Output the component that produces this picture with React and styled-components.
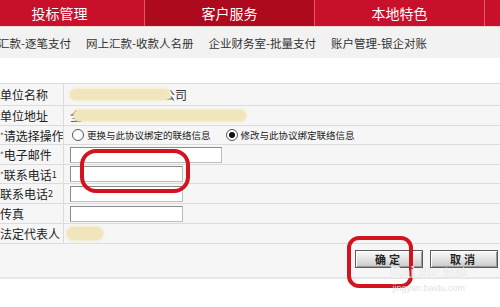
import React from "react";
import styled, { createGlobalStyle, css } from "styled-components";

const Global = createGlobalStyle`
  html, body { margin: 0; padding: 0; background: #fff; }
  body { font-family: "Noto Sans CJK SC", "Noto Sans", sans-serif; color: #333; }
`;

const Page = styled.div`
  position: relative;
  width: 500px;
  height: 307px;
  overflow: hidden;
  background: #fff;
`;

const NavBar = styled.div`
  display: flex;
  height: 26px;
  margin-left: -25px;
  background: #c8102b;
  border-bottom: 1px solid #f4d4d8;
`;

const NavItem = styled.div`
  flex: 0 0 170px;
  display: flex;
  align-items: center;
  justify-content: center;
  font-size: 14px;
  color: #fff;
  border-right: 1px solid #dc5a6a;
  box-sizing: border-box;
  ${(p) =>
    p.$active &&
    css`
      background: #ad0a1d;
    `}
`;

const SubNav = styled.div`
  display: flex;
  align-items: center;
  gap: 15px;
  height: 31px;
  margin-left: -2px;
  background: #f2f2f2;
  font-size: 11.5px;
  color: #333;
  white-space: nowrap;
`;

const FormTable = styled.div`
  margin-top: 25px;
  background: #f6f6f6;
  border-top: 1px solid #dcdcdc;
`;

const Row = styled.div`
  display: grid;
  grid-template-columns: 64px 1fr;
  height: ${(p) => p.$h}px;
  box-sizing: border-box;
  border-bottom: 1px solid #dcdcdc;
`;

const Label = styled.div`
  display: flex;
  align-items: center;
  font-size: 12px;
  color: #222;
  border-right: 1px solid #dcdcdc;
  white-space: nowrap;
  overflow: hidden;
`;

const Star = styled.span`
  font-size: 8px;
  color: #444;
`;

const Small = styled.span`
  font-size: 9px;
`;

const Value = styled.div`
  display: flex;
  align-items: center;
  padding-left: 6px;
  font-size: 12px;
  color: #222;
  white-space: nowrap;
`;

const Blob = styled.span`
  display: inline-block;
  position: relative;
  z-index: 1;
  width: ${(p) => p.$w}px;
  height: ${(p) => p.$hh || 11}px;
  border-radius: 8px;
  background: #f1e5bd;
  box-shadow: 0 0 3px 1px #f4ebca;
  margin-left: ${(p) => p.$ml || 0}px;
  margin-right: ${(p) => p.$mr || 0}px;
`;

const Faint = styled.span`
  font-size: 12px;
  color: #333;
`;

const TextInput = styled.div`
  width: ${(p) => p.$w}px;
  height: 14px;
  border: 1px solid #8a8a8a;
  border-right-color: #bdbdbd;
  border-bottom-color: #bdbdbd;
  background: #fff;
`;

const RadioGroup = styled.label`
  display: flex;
  align-items: center;
  gap: 3px;
  margin-left: 2px;
  margin-right: 13px;
  font-size: 9.5px;
  color: #222;
`;

const RadioCircle = styled.span`
  position: relative;
  display: inline-block;
  width: 10px;
  height: 10px;
  border-radius: 50%;
  border: 1px solid #555;
  background: #fff;
  ${(p) =>
    p.$checked &&
    css`
      &::after {
        content: "";
        position: absolute;
        left: 2px;
        top: 2px;
        width: 6px;
        height: 6px;
        border-radius: 50%;
        background: #111;
      }
    `}
`;

const ButtonRow = styled.div`
  display: flex;
  justify-content: flex-end;
  align-items: center;
  gap: 7px;
  height: 35px;
  padding-right: 2px;
  padding-bottom: 4px;
  box-sizing: border-box;
  background: #f6f6f6;
  border-bottom: 2px solid #e6e6e6;
`;

const Button = styled.button`
  width: 68px;
  height: 18px;
  padding: 0;
  border: 1px solid #5a5a5a;
  box-shadow: inset 1px 1px 0 #fff, inset -1px -1px 0 #9a9a9a;
  background: linear-gradient(#fafafa, #e4e4e4 50%, #c9c9c9);
  font-family: "Noto Sans CJK SC", sans-serif;
  font-size: 11px;
  font-weight: bold;
  letter-spacing: 3px;
  line-height: 14px;
  color: #222;
`;

const Mark = styled.div`
  position: absolute;
  left: ${(p) => p.$x}px;
  top: ${(p) => p.$y}px;
  width: ${(p) => p.$w}px;
  height: ${(p) => p.$h}px;
  border: 4px solid #d3141f;
  border-radius: ${(p) => p.$r}px;
  box-sizing: border-box;
  z-index: 5;
  pointer-events: none;
`;

const Watermark = styled.div`
  position: absolute;
  left: 390px;
  top: 266px;
  z-index: 6;
  display: flex;
  flex-direction: column;
  align-items: center;
  color: rgba(255, 255, 255, 0.8);
  text-shadow: 0 0 1px rgba(170, 170, 170, 0.55);
  font-family: "Liberation Sans", sans-serif;
  pointer-events: none;
`;

const WmTitle = styled.div`
  font-size: 16px;
  font-weight: bold;
  line-height: 14px;
  & span {
    font-family: "Noto Sans CJK SC", sans-serif;
    font-size: 12px;
    font-weight: normal;
  }
`;

const WmUrl = styled.div`
  margin-top: 3px;
  font-size: 9px;
  line-height: 10px;
  color: rgba(222, 222, 222, 0.9);
  text-shadow: none;
`;

export default function App() {
  return (
    <Page>
      <Global />
      <NavBar>
        <NavItem>投标管理</NavItem>
        <NavItem $active>客户服务</NavItem>
        <NavItem>本地特色</NavItem>
        <NavItem />
      </NavBar>
      <SubNav>
        <span>汇款-逐笔支付</span>
        <span>网上汇款-收款人名册</span>
        <span>企业财务室-批量支付</span>
        <span>账户管理-银企对账</span>
      </SubNav>
      <FormTable>
        <Row $h={22}>
          <Label>单位名称</Label>
          <Value>
            <Blob $w={100} $mr={-7} />
            <Faint>公司</Faint>
          </Value>
        </Row>
        <Row $h={20}>
          <Label>单位地址</Label>
          <Value>
            <Faint>全</Faint>
            <Blob $w={172} $ml={-8} />
          </Value>
        </Row>
        <Row $h={19}>
          <Label>
            <Star>*</Star>请选择操作
          </Label>
          <Value>
            <RadioGroup>
              <RadioCircle />
              更换与此协议绑定的联络信息
            </RadioGroup>
            <RadioGroup>
              <RadioCircle $checked />
              修改与此协议绑定联络信息
            </RadioGroup>
          </Value>
        </Row>
        <Row $h={20}>
          <Label>
            <Star>*</Star>电子邮件
          </Label>
          <Value>
            <TextInput $w={150} />
          </Value>
        </Row>
        <Row $h={19}>
          <Label>
            <Star>*</Star>联系电话<Small>1</Small>
          </Label>
          <Value>
            <TextInput $w={111} />
          </Value>
        </Row>
        <Row $h={20}>
          <Label>
            联系电话<Small>2</Small>
          </Label>
          <Value>
            <TextInput $w={111} />
          </Value>
        </Row>
        <Row $h={20}>
          <Label>传真</Label>
          <Value>
            <TextInput $w={111} />
          </Value>
        </Row>
        <Row $h={20}>
          <Label>法定代表人</Label>
          <Value>
            <Blob $w={36} $hh={13} $ml={-3} />
          </Value>
        </Row>
      </FormTable>
      <ButtonRow>
        <Button>确定</Button>
        <Button>取消</Button>
      </ButtonRow>
      <Mark $x={80} $y={149} $w={110} $h={44} $r={16} />
      <Mark $x={347} $y={236} $w={66} $h={52} $r={12} />
      <Watermark>
        <WmTitle>
          Bai du <span>经验</span>
        </WmTitle>
        <WmUrl>jingyan.baidu.com</WmUrl>
      </Watermark>
    </Page>
  );
}
